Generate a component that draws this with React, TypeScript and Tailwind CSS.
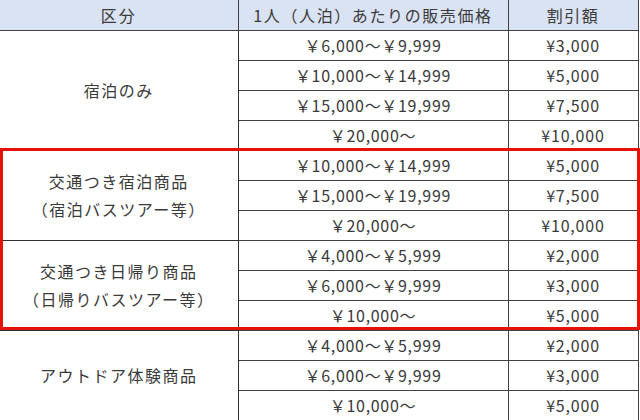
const rows: { group?: { lines: string[]; span: number }; price: string; discount: string }[] = [
    { group: { lines: ['宿泊のみ'], span: 4 }, price: '￥6,000～￥9,999', discount: '¥3,000' },
    { price: '￥10,000～￥14,999', discount: '¥5,000' },
    { price: '￥15,000～￥19,999', discount: '¥7,500' },
    { price: '￥20,000～', discount: '¥10,000' },
    { group: { lines: ['交通つき宿泊商品', '（宿泊バスツアー等）'], span: 3 }, price: '￥10,000～￥14,999', discount: '¥5,000' },
    { price: '￥15,000～￥19,999', discount: '¥7,500' },
    { price: '￥20,000～', discount: '¥10,000' },
    { group: { lines: ['交通つき日帰り商品', '（日帰りバスツアー等）'], span: 3 }, price: '￥4,000～￥5,999', discount: '¥2,000' },
    { price: '￥6,000～￥9,999', discount: '¥3,000' },
    { price: '￥10,000～', discount: '¥5,000' },
    { group: { lines: ['アウトドア体験商品'], span: 3 }, price: '￥4,000～￥5,999', discount: '¥2,000' },
    { price: '￥6,000～￥9,999', discount: '¥3,000' },
    { price: '￥10,000～', discount: '¥5,000' },
];

export default function App() {
    return (
        <div
            className="relative h-[420px] w-[640px] overflow-hidden bg-white text-[16px] text-[#3a3a3a]"
            style={{ fontFamily: '"Noto Sans CJK JP", "Noto Sans", sans-serif' }}
        >
            <table className="w-[638px] table-fixed border-collapse">
                <colgroup>
                    <col className="w-[238px]" />
                    <col className="w-[270px]" />
                    <col className="w-[130px]" />
                </colgroup>
                <thead>
                    <tr className="h-[30px] bg-[#dae3f3]">
                        <th className="border-r border-b border-[#404040] p-0 text-center font-normal tracking-[2px]">区分</th>
                        <th className="border-r border-b border-[#404040] p-0 text-center font-normal tracking-[1.6px]">
                            1人（人泊）あたりの販売価格
                        </th>
                        <th className="border-r border-b border-[#404040] p-0 text-center font-normal tracking-[1.5px]">割引額</th>
                    </tr>
                </thead>
                <tbody>
                    {rows.map((row, i) => (
                        <tr key={i} className="h-[30px]">
                            {row.group && (
                                <td
                                    rowSpan={row.group.span}
                                    className="border-r border-b border-[#303030] p-0 text-center align-middle leading-[28px] tracking-[1.5px]"
                                >
                                    {row.group.lines.map((line) => (
                                        <div key={line}>{line}</div>
                                    ))}
                                </td>
                            )}
                            <td className="border-r border-b border-[#404040] p-0 text-center leading-[29px] tracking-[0.7px]">
                                {row.price}
                            </td>
                            <td className="border-r border-b border-[#404040] p-0 text-center leading-[29px] tracking-[0.8px]">
                                {row.discount}
                            </td>
                        </tr>
                    ))}
                </tbody>
            </table>

            {/* red highlight box around the transport groups */}
            <div className="pointer-events-none absolute top-[148px] left-0 h-[182px] w-[640px] border-[3px] border-[#e3120b]" />
        </div>
    );
}
